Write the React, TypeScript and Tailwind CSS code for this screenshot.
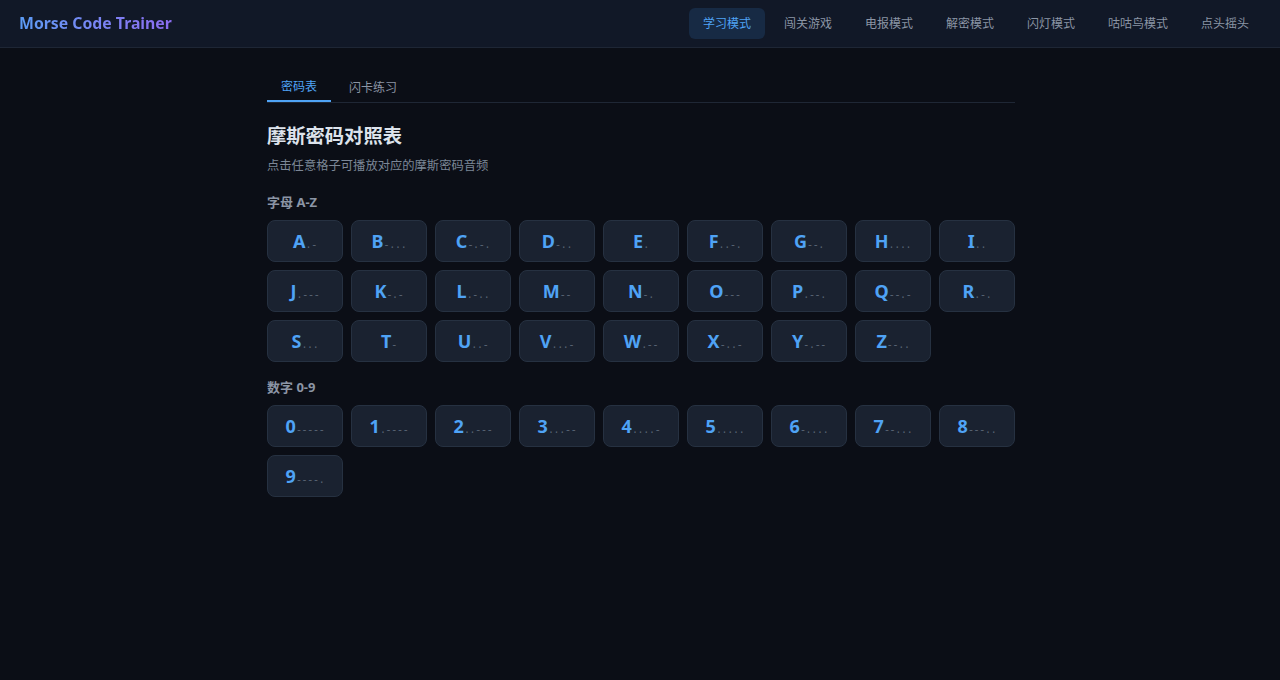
import React from "react";

const LETTERS: [string, string][] = [
  ["A", ".-"], ["B", "-..."], ["C", "-.-."], ["D", "-.."], ["E", "."], ["F", "..-."],
  ["G", "--."], ["H", "...."], ["I", ".."], ["J", ".---"], ["K", "-.-"], ["L", ".-.."],
  ["M", "--"], ["N", "-."], ["O", "---"], ["P", ".--."], ["Q", "--.-"], ["R", ".-."],
  ["S", "..."], ["T", "-"], ["U", "..-"], ["V", "...-"], ["W", ".--"], ["X", "-..-"],
  ["Y", "-.--"], ["Z", "--.."],
];

const DIGITS: [string, string][] = [
  ["0", "-----"], ["1", ".----"], ["2", "..---"], ["3", "...--"], ["4", "....-"],
  ["5", "....."], ["6", "-...."], ["7", "--..."], ["8", "---.."], ["9", "----."],
];

const NAV = ["学习模式", "闯关游戏", "电报模式", "解密模式", "闪灯模式", "咕咕鸟模式", "点头摇头"];

function Cell({ ch, code }: { ch: string; code: string }) {
  return (
    <button className="h-[42px] rounded-lg bg-[#1a2230] border border-[#263141] flex items-baseline justify-center pt-[8px]">
      <span className="text-[18px] leading-[24px] font-bold text-[#4fa3f5]">{ch}</span>
      <span className="text-[10px] leading-[12px] text-[#5a6676] font-['Liberation_Mono',monospace] tracking-[-0.3px]">{code}</span>
    </button>
  );
}

export default function App() {
  return (
    <div className="min-h-[680px] bg-[#0b0e16] font-['Noto_Sans','Noto_Sans_CJK_SC',sans-serif]">
      <header className="h-12 bg-[#111827] border-b border-[#1e2635] flex items-center justify-between pl-[19px] pr-[17px]">
        <div className="text-[15.8px] font-bold bg-gradient-to-r from-[#5b9cf6] to-[#8b6cf0] bg-clip-text text-transparent">
          Morse Code Trainer
        </div>
        <nav className="flex items-center gap-[5px]">
          {NAV.map((n, i) => (
            <button
              key={n}
              className={
                i === 0
                  ? "px-[14px] py-2 text-[12px] leading-[15px] rounded-md bg-[#172a44] text-[#4fa3f5]"
                  : "px-[14px] py-2 text-[12px] leading-[15px] rounded-md text-[#8b95a5]"
              }
            >
              {n}
            </button>
          ))}
        </nav>
      </header>
      <main className="w-[750px] mx-auto pt-6 pl-[2px]">
        <div className="flex gap-[4px] border-b border-[#1f2735]">
          <button className="px-[14px] h-[30px] pt-[2px] text-[12px] text-[#4fa3f5] border-b-2 border-[#4fa3f5] -mb-px">密码表</button>
          <button className="px-[14px] h-[30px] pt-[2px] text-[12px] text-[#8b95a5]">闪卡练习</button>
        </div>
        <h2 className="mt-[19px] text-[19.3px] leading-[28px] font-bold text-[#dde3ec]">摩斯密码对照表</h2>
        <p className="mt-[7px] text-[12.3px] leading-[18px] text-[#7c8797]">点击任意格子可播放对应的摩斯密码音频</p>
        <h3 className="mt-[18px] text-[13px] leading-[18px] font-bold text-[#8b95a5]">字母 A-Z</h3>
        <div className="mt-[9px] grid grid-cols-9 gap-2">
          {LETTERS.map(([c, m]) => (
            <Cell key={c} ch={c} code={m} />
          ))}
        </div>
        <h3 className="mt-4 text-[13px] leading-[18px] font-bold text-[#8b95a5]">数字 0-9</h3>
        <div className="mt-[9px] grid grid-cols-9 gap-2">
          {DIGITS.map(([c, m]) => (
            <Cell key={c} ch={c} code={m} />
          ))}
        </div>
      </main>
    </div>
  );
}
